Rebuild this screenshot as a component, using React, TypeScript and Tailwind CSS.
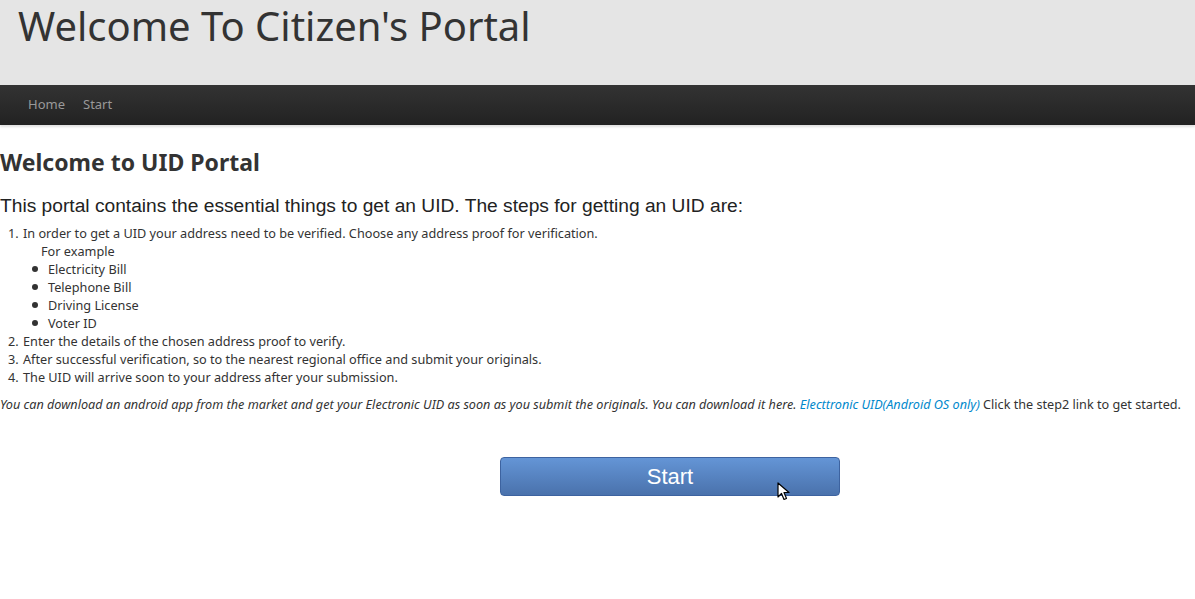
import React from 'react'

const ubuntu = { fontFamily: '"Noto Sans", "Open Sans", sans-serif' }
const arial = { fontFamily: '"Liberation Sans", Arial, sans-serif' }

const Cursor = () => (
  <svg width="14" height="20" viewBox="0 0 14 20" className="absolute left-[777px] top-[482px]">
    <path d="M1 1 L1 15 L4.5 11.5 L7 17.5 L9.5 16.5 L7 10.5 L12 10.5 Z" fill="#fff" stroke="#000" strokeWidth="1.2" strokeLinejoin="round" />
  </svg>
)

export default function App() {
  const proofs = ['Electricity Bill', 'Telephone Bill', 'Driving License', 'Voter ID']

  return (
    <div className="relative min-h-[599px] bg-white text-[#333]" style={ubuntu}>
      {/* Header */}
      <header className="h-[85px] bg-[#e5e5e5] px-[18px]">
        <h1 className="pt-[1px] text-[40px] font-normal leading-[50px] text-[#333]">
          Welcome To Citizen's Portal
        </h1>
      </header>

      {/* Nav */}
      <nav className="flex h-[40px] items-center gap-[18px] bg-gradient-to-b from-[#333333] to-[#222222] px-[28px] text-[13px] text-[#999] shadow-[0_2px_2px_rgba(0,0,0,0.12)]">
        <a>Home</a>
        <a>Start</a>
      </nav>

      {/* Content */}
      <main className="pt-[22px]">
        <h2 className="text-[23px] font-bold leading-[30px] text-[#333]">Welcome to UID Portal</h2>
        <p className="mt-[17px] text-[19.2px] leading-[24px] text-[#222]" style={arial}>
          This portal contains the essential things to get an UID. The steps for getting an UID are:
        </p>

        <ol className="mt-[6px] pl-[8px] text-[12.7px] leading-[18px] text-[#333]">
          <li className="flex">
            <span className="w-[15px]">1.</span>
            <div>
              <div>In order to get a UID your address need to be verified. Choose any address proof for verification.</div>
              <div className="pl-[18px]">For example</div>
              <ul>
                {proofs.map((p) => (
                  <li key={p} className="flex items-center">
                    <span className="ml-[9px] mr-[10px] h-[6px] w-[6px] rounded-full bg-[#333]" />
                    {p}
                  </li>
                ))}
              </ul>
            </div>
          </li>
          <li className="flex">
            <span className="w-[15px]">2.</span>
            <span>Enter the details of the chosen address proof to verify.</span>
          </li>
          <li className="flex">
            <span className="w-[15px]">3.</span>
            <span>After successful verification, so to the nearest regional office and submit your originals.</span>
          </li>
          <li className="flex">
            <span className="w-[15px]">4.</span>
            <span>The UID will arrive soon to your address after your submission.</span>
          </li>
        </ol>

        <p className="mt-[9px] text-[12.65px] leading-[18px] text-[#333]">
          <em>
            You can download an android app from the market and get your Electronic UID as soon as you submit the
            originals. You can download it here.{' '}
          </em>
          <a className="italic text-[#0088cc]">Electtronic UID(Android OS only)</a> Click the step2 link to get started.
        </p>

        <div className="mt-[44px] flex pl-[500px]">
          <button
            className="h-[39px] w-[340px] rounded-[4px] border border-[#3d63a0] bg-gradient-to-b from-[#6495d6] to-[#4a72ac] text-[22px] text-white"
            style={arial}
          >
            Start
          </button>
        </div>
      </main>

      <Cursor />
    </div>
  )
}
